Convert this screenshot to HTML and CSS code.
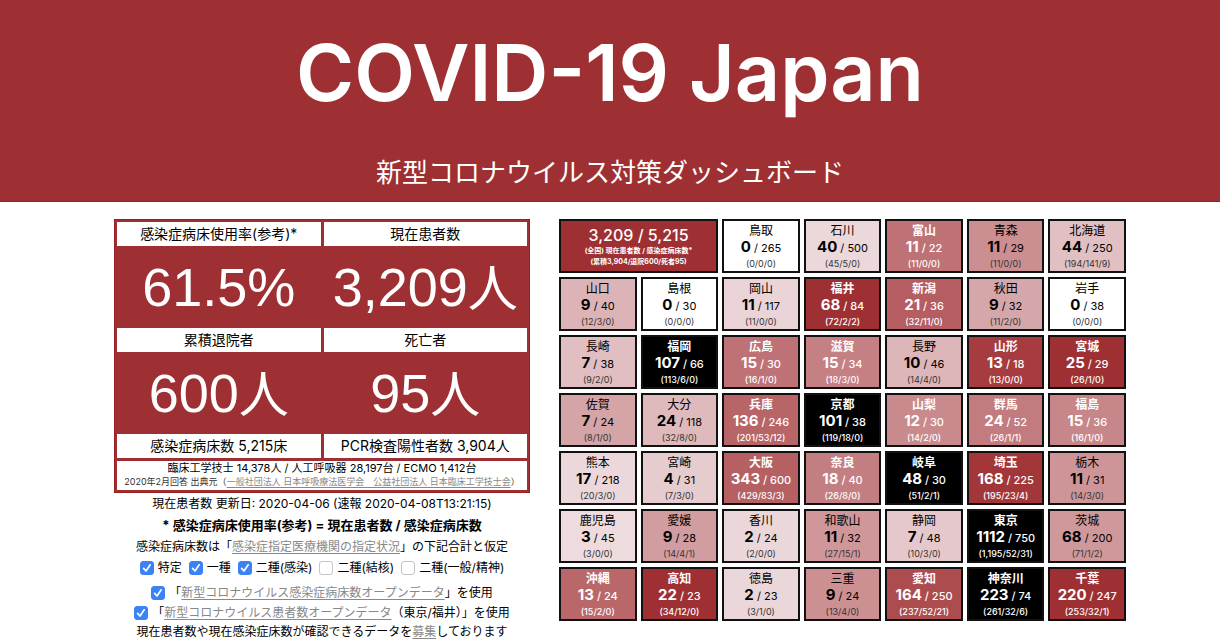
FILE: index.html
```html
<!DOCTYPE html>
<html lang="ja">
<head>
<meta charset="utf-8">
<meta name="viewport" content="width=device-width, initial-scale=1">
<title>COVID-19 Japan</title>
<link rel="stylesheet" href="styles.css">
</head>
<body>
<header class="hero">
  <h1 class="hero-title">COVID-19 Japan</h1>
  <p class="hero-subtitle">新型コロナウイルス対策ダッシュボード</p>
</header>
<main class="board">
  <section class="summary">
    <div class="stats">
      <div class="stat-label">感染症病床使用率(参考)*</div>
      <div class="stat-label">現在患者数</div>
      <div class="stat-value">61.5%</div>
      <div class="stat-value">3,209<span class="unit">人</span></div>
      <div class="stat-label">累積退院者</div>
      <div class="stat-label">死亡者</div>
      <div class="stat-value">600<span class="unit">人</span></div>
      <div class="stat-value">95<span class="unit">人</span></div>
      <div class="stat-label">感染症病床数 5,215床</div>
      <div class="stat-label">PCR検査陽性者数 3,904人</div>
      <div class="stat-note">
        <p class="note-main">臨床工学技士 14,378人 / 人工呼吸器 28,197台 / ECMO 1,412台</p>
        <p class="note-source">2020年2月回答 出典元（<a href="#source">一般社団法人 日本呼吸療法医学会　公益社団法人 日本臨床工学技士会</a>）</p>
      </div>
    </div>
    <p class="updated">現在患者数 更新日: 2020-04-06 (速報 2020-04-08T13:21:15)</p>
    <p class="formula">* 感染症病床使用率(参考) = 現在患者数 / 感染症病床数</p>
    <p class="line">感染症病床数は「<a href="#beds">感染症指定医療機関の指定状況</a>」の下記合計と仮定</p>
    <div class="types">
      <label class="check"><input type="checkbox" checked>特定</label>
      <label class="check"><input type="checkbox" checked>一種</label>
      <label class="check"><input type="checkbox" checked>二種(感染)</label>
      <label class="check"><input type="checkbox">二種(結核)</label>
      <label class="check"><input type="checkbox">二種(一般/精神)</label>
    </div>
    <div class="sources">
      <div class="source"><input type="checkbox" id="use-beds" checked><label for="use-beds">「<a href="#bed-data">新型コロナウイルス感染症病床数オープンデータ</a>」を使用</label></div>
      <div class="source"><input type="checkbox" id="use-patients" checked><label for="use-patients">「<a href="#patient-data">新型コロナウイルス患者数オープンデータ</a>（東京/福井）」を使用</label></div>
    </div>
    <p class="call">現在患者数や現在感染症床数が確認できるデータを<a href="#contribute">募集</a>しております</p>
  </section>
  <section class="prefectures" id="prefectures">
    <div class="total">
      <div class="total-count">3,209 / 5,215</div>
      <div class="total-note">(全国) 現在患者数 / 感染症病床数*</div>
      <div class="total-note">(累積3,904/退院600/死者95)</div>
    </div>
  </section>
</main>
<script src="script.js"></script>
</body>
</html>
```

FILE: styles.css
```css
* { box-sizing: border-box; }

body {
  margin: 0;
  background: #fff;
  color: #000;
  font-family: Inter, "Noto Sans CJK JP", sans-serif;
  text-align: center;
}

h1, p { margin: 0; }

a {
  color: #888;
  text-decoration: underline;
  text-underline-offset: 2px;
}

.hero {
  background: #9e3033;
  color: #fff;
  padding: 22px 16px 8px;
  border-bottom: 1px solid #9c1f20;
}

.hero-title {
  font-size: 79px;
  font-weight: 600;
  line-height: 100px;
}

.hero-subtitle {
  margin-top: 31px;
  font-size: 26px;
  line-height: 40px;
}

.board {
  display: grid;
  grid-template-columns: 416fr 567fr;
  gap: 29px;
  align-items: start;
  padding: 17px 94px 0 114px;
}

.summary {
  font-size: 12px;
  line-height: 20px;
  white-space: nowrap;
}

.stats {
  display: grid;
  grid-template-columns: 1fr 1fr;
  column-gap: 3px;
  padding: 2px;
  background: #9e3033;
  border: 1px solid #9c1f20;
}

.stat-label {
  background: #fff;
  font-size: 14px;
  line-height: 24px;
}

.stat-value {
  color: #fff;
  font-family: "Liberation Sans", "Noto Sans CJK JP", sans-serif;
  font-size: 54px;
  line-height: 82px;
}

.unit { font-size: 50px; line-height: 1; }

.stat-note {
  grid-column: 1 / -1;
  margin-top: 3px;
  padding: 1px 0 2px;
  background: #fff;
}

.note-main {
  font-size: 11px;
  line-height: 13px;
}

.note-source {
  color: #333;
  font-size: 9px;
  line-height: 13px;
}

.updated { line-height: 21px; }

.formula {
  font-size: 13px;
  font-weight: 700;
  line-height: 22px;
}

.line { line-height: 22px; }

.types {
  display: flex;
  justify-content: center;
  gap: 7px;
}

.check,
.source {
  display: flex;
  justify-content: center;
  align-items: center;
  gap: 4px;
}

.sources { margin-top: 5px; }

.call { line-height: 18px; }

input[type="checkbox"] {
  appearance: none;
  flex: none;
  width: 14px;
  height: 14px;
  margin: 0;
  background: #fff;
  border: 1px solid #c4c4c4;
  border-radius: 3px;
}

input[type="checkbox"]:checked {
  border-color: #3b82f7;
  background: #3b82f7 url("data:image/svg+xml,%3Csvg xmlns='http://www.w3.org/2000/svg' viewBox='0 0 12 12'%3E%3Cpath d='M2.6 6.4 5 9 9.2 2.8' fill='none' stroke='white' stroke-width='1.7' stroke-linecap='round' stroke-linejoin='round'/%3E%3C/svg%3E") center / 12px no-repeat;
}

.prefectures {
  display: grid;
  grid-template-columns: repeat(7, 1fr);
  gap: 4px;
  white-space: nowrap;
}

.total,
.pref {
  padding: 1px 0;
  border: 2px solid #111;
}

.total {
  grid-column: span 2;
  padding-top: 4px;
  background: #9e3033;
  color: #fff;
}

.total-count {
  font-size: 16px;
  font-weight: 500;
  line-height: 20px;
}

.total-note {
  font-size: 7px;
  font-weight: 700;
  line-height: 11px;
}

.pref-name {
  font-size: 12px;
  line-height: 17px;
}

.pref-count {
  font-size: 11px;
  line-height: 18px;
}

.pref-count strong {
  font-size: 15px;
  line-height: 1;
}

.pref-detail {
  color: #333;
  font-size: 9px;
  line-height: 13px;
}

.pref.is-high {
  color: #fff;
  font-weight: 500;
}

.is-high .pref-name { font-weight: 700; }

.is-high .pref-detail { color: #fff; }
```

FILE: script.js
```js
// name, current patients, beds, (total / discharged / deaths)
const prefectures = [
  ["鳥取", 0, 265, "0/0/0"], ["石川", 40, 500, "45/5/0"], ["富山", 11, 22, "11/0/0"], ["青森", 11, 29, "11/0/0"], ["北海道", 44, 250, "194/141/9"],
  ["山口", 9, 40, "12/3/0"], ["島根", 0, 30, "0/0/0"], ["岡山", 11, 117, "11/0/0"], ["福井", 68, 84, "72/2/2"], ["新潟", 21, 36, "32/11/0"], ["秋田", 9, 32, "11/2/0"], ["岩手", 0, 38, "0/0/0"],
  ["長崎", 7, 38, "9/2/0"], ["福岡", 107, 66, "113/6/0"], ["広島", 15, 30, "16/1/0"], ["滋賀", 15, 34, "18/3/0"], ["長野", 10, 46, "14/4/0"], ["山形", 13, 18, "13/0/0"], ["宮城", 25, 29, "26/1/0"],
  ["佐賀", 7, 24, "8/1/0"], ["大分", 24, 118, "32/8/0"], ["兵庫", 136, 246, "201/53/12"], ["京都", 101, 38, "119/18/0"], ["山梨", 12, 30, "14/2/0"], ["群馬", 24, 52, "26/1/1"], ["福島", 15, 36, "16/1/0"],
  ["熊本", 17, 218, "20/3/0"], ["宮崎", 4, 31, "7/3/0"], ["大阪", 343, 600, "429/83/3"], ["奈良", 18, 40, "26/8/0"], ["岐阜", 48, 30, "51/2/1"], ["埼玉", 168, 225, "195/23/4"], ["栃木", 11, 31, "14/3/0"],
  ["鹿児島", 3, 45, "3/0/0"], ["愛媛", 9, 28, "14/4/1"], ["香川", 2, 24, "2/0/0"], ["和歌山", 11, 32, "27/15/1"], ["静岡", 7, 48, "10/3/0"], ["東京", 1112, 750, "1,195/52/31"], ["茨城", 68, 200, "71/1/2"],
  ["沖縄", 13, 24, "15/2/0"], ["高知", 22, 23, "34/12/0"], ["徳島", 2, 23, "3/1/0"], ["三重", 9, 24, "13/4/0"], ["愛知", 164, 250, "237/52/21"], ["神奈川", 223, 74, "261/32/6"], ["千葉", 220, 247, "253/32/1"]
];

// White when empty, pink to red as beds fill, black when over capacity
function heat(ratio) {
  if (ratio === 0) return "#fff";
  if (ratio > 1) return "#000";
  const r = Math.max(158, Math.round(244 - 108 * ratio));
  const g = Math.max(48, Math.round(235 - 243 * ratio));
  return `rgb(${r}, ${g}, ${g + 3})`;
}

const grid = document.getElementById("prefectures");
for (const [name, patients, beds, detail] of prefectures) {
  const ratio = patients / beds;
  const cell = document.createElement("div");
  cell.className = ratio >= 0.4 ? "pref is-high" : "pref";
  cell.style.backgroundColor = heat(ratio);
  cell.innerHTML = `<div class="pref-name">${name}</div>
    <div class="pref-count"><strong>${patients}</strong> / ${beds}</div>
    <div class="pref-detail">(${detail})</div>`;
  grid.append(cell);
}
```
